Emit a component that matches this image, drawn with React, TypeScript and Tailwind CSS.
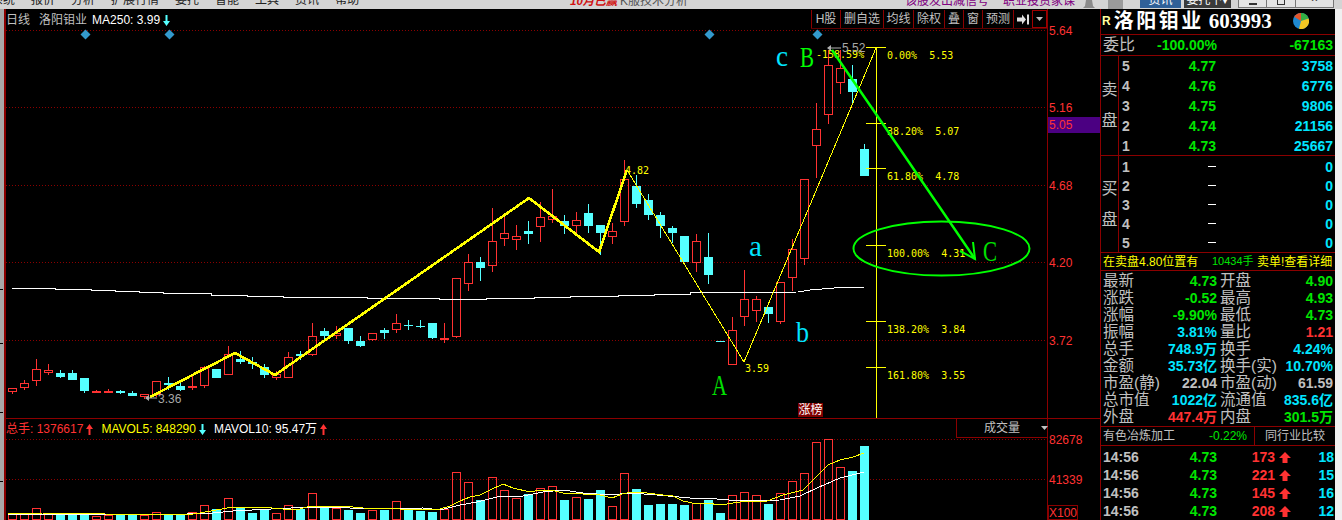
import React from "react";

/* =========================================================
   DATA
   candle: [color, high, bodyTop, bodyBottom, low] in page px
========================================================== */
type Candle = ["r" | "c", number, number, number, number];

const candles: Candle[] = [
  ["r", 388, 388, 391, 394], ["r", 380, 383, 387, 390], ["r", 359, 369, 380, 386], ["r", 364, 370, 372, 375],
  ["c", 370, 373, 377, 378], ["c", 370, 373, 380, 380], ["c", 378, 378, 391, 393], ["r", 390, 391, 392, 393],
  ["r", 389, 391, 392, 393], ["c", 390, 391, 393, 394], ["c", 391, 393, 396, 396], ["r", 394, 394, 396, 399],
  ["r", 381, 381, 394, 397], ["c", 377, 383, 385, 390], ["c", 382, 386, 390, 391], ["r", 376, 386, 387, 390],
  ["r", 366, 367, 385, 388], ["c", 369, 369, 378, 378], ["r", 346, 354, 374, 374], ["c", 351, 359, 362, 364],
  ["c", 357, 362, 364, 369], ["c", 364, 367, 375, 378], ["r", 371, 374, 377, 380], ["r", 352, 357, 377, 377],
  ["c", 351, 354, 356, 360], ["r", 323, 336, 354, 356], ["c", 328, 331, 336, 339], ["r", 326, 333, 335, 339],
  ["c", 328, 328, 341, 344], ["c", 336, 341, 346, 347], ["r", 333, 333, 339, 341], ["c", 328, 330, 333, 339],
  ["r", 314, 323, 329, 333], ["c", 320, 325, 326, 330], ["c", 320, 326, 327, 328], ["c", 323, 323, 338, 339],
  ["r", 323, 338, 339, 343], ["r", 278, 278, 336, 338], ["r", 254, 262, 283, 291], ["c", 257, 262, 268, 281],
  ["r", 208, 241, 265, 272], ["r", 214, 233, 238, 246], ["r", 225, 236, 239, 250], ["c", 221, 231, 234, 244],
  ["r", 202, 217, 226, 242], ["r", 189, 216, 219, 223], ["c", 215, 221, 226, 234], ["r", 212, 220, 225, 234],
  ["c", 204, 213, 226, 233], ["c", 225, 225, 233, 255], ["r", 223, 231, 236, 244], ["r", 160, 179, 221, 226],
  ["c", 175, 186, 204, 208], ["c", 194, 200, 215, 220], ["c", 212, 215, 226, 238], ["c", 226, 228, 233, 243],
  ["c", 236, 236, 262, 262], ["r", 234, 241, 262, 272], ["c", 233, 257, 275, 284], ["c", 341, 341, 341, 341],
  ["r", 317, 330, 364, 364], ["r", 270, 299, 316, 326], ["r", 296, 299, 310, 322], ["c", 307, 307, 314, 323],
  ["r", 282, 282, 321, 324], ["r", 239, 249, 277, 291], ["r", 179, 179, 258, 265], ["r", 103, 129, 145, 178],
  ["r", 50, 65, 114, 124], ["r", 50, 68, 82, 94], ["c", 65, 79, 92, 103], ["c", 144, 149, 176, 176],
];

const volumeTops = [
  514, 513, 508, 513, 515, 515, 513, 516, 515, 515, 515, 515, 512, 515, 515, 512, 505, 509,
  498, 508, 513, 509, 513, 505, 509, 493, 508, 508, 510, 513, 510, 510, 501, 509, 511, 512,
  509, 472, 482, 500, 477, 490, 498, 494, 488, 486, 500, 497, 499, 490, 506, 473, 489, 505,
  504, 504, 505, 503, 500, 513, 495, 492, 495, 504, 493, 481, 473, 442, 439, 467, 471, 446,
];

const ma250 =
  "12,288 55,288 55,289 91,289 91,290 115,290 115,291 139,291 139,292 163,292 163,293 211,293 211,295 247,295 247,296 283,296 283,297 367,297 367,298 439,298 439,299 486,299 486,298 534,298 534,297 570,297 570,296 618,296 618,295 654,295 654,294 690,294 690,293 798,292 810,290 822,289 834,288 864,287";

const volYellow =
  "8,514 43,513 78,513 105,514 187,515 200,513 227,508 237,507 260,507 283,509 300,509 310,506 343,506 363,508 400,509 440,509 450,506 460,501 470,497 480,495 490,490 503,484 513,488 530,492 540,490 555,491 563,493 583,494 600,495 612,498 622,494 633,492 647,493 663,495 673,496 683,501 697,504 707,503 720,505 740,502 767,501 783,495 803,490 815,478 828,465 840,460 853,457 864,453";

const volWhite =
  "8,514 103,515 187,514 213,513 233,511 310,507 333,507 367,509 423,508 440,510 460,505 477,502 497,497 523,496 543,492 563,490 583,493 610,495 630,493 657,495 690,498 717,499 740,501 780,500 800,496 817,488 840,478 864,472";

const stats: [string, string, string, string, string, string][] = [
  ["最新", "4.73", "text-[#00e600]", "开盘", "4.90", "text-[#00e600]"],
  ["涨跌", "-0.52", "text-[#00e600]", "最高", "4.93", "text-[#00e600]"],
  ["涨幅", "-9.90%", "text-[#00e600]", "最低", "4.73", "text-[#00e600]"],
  ["振幅", "3.81%", "text-[#00e5ff]", "量比", "1.21", "text-[#ff3232]"],
  ["总手", "748.9万", "text-[#00e5ff]", "换手", "4.24%", "text-[#00e5ff]"],
  ["金额", "35.73亿", "text-[#00e5ff]", "换手(实)", "10.70%", "text-[#00e5ff]"],
  ["市盈(静)", "22.04", "text-[#c0c0c0]", "市盈(动)", "61.59", "text-[#c0c0c0]"],
  ["总市值", "1022亿", "text-[#00e5ff]", "流通值", "835.6亿", "text-[#00e5ff]"],
  ["外盘", "447.4万", "text-[#ff3232]", "内盘", "301.5万", "text-[#00e600]"],
];

const sells = [
  ["5", "4.77", "3758"],
  ["4", "4.76", "6776"],
  ["3", "4.75", "9806"],
  ["2", "4.74", "21156"],
  ["1", "4.73", "25667"],
];

const ticks = [
  ["173", "18"],
  ["221", "15"],
  ["145", "16"],
  ["208", "12"],
];

const fibs: [number, string][] = [
  [47.5, "0.00%  5.53"],
  [123.5, "38.20%  5.07"],
  [168.5, "61.80%  4.78"],
  [245.5, "100.00%  4.31"],
  [321.5, "138.20%  3.84"],
  [367.5, "161.80%  3.55"],
];

const toolbar: [string, string][] = [
  ["H股", "w-[29px]"],
  ["删自选", "w-[43px]"],
  ["均线", "w-[30px]"],
  ["除权", "w-[31px]"],
  ["叠", "w-[19px]"],
  ["窗", "w-[19px]"],
  ["预测", "w-[31px]"],
];

const RED = "#ff3232";
const CYAN = "#55ffff";
const YELLOW = "#ffff00";
const DOT = "#8b0000";

/* =========================================================
   SMALL GLYPHS
========================================================== */
function ThinArrow({ up, color }: { up?: boolean; color: string }) {
  return (
    <svg width="7" height="11" viewBox="0 0 7 11" className={up ? "" : "rotate-180"}>
      <polygon points="3.5,0 7,5 4.5,5 4.5,11 2.5,11 2.5,5 0,5" fill={color} />
    </svg>
  );
}

function FatArrow() {
  return (
    <svg width="12" height="11" viewBox="0 0 12 11">
      <polygon points="6,0 12,6 8.5,6 8.5,11 3.5,11 3.5,6 0,6" fill={RED} />
    </svg>
  );
}

function PieLogo() {
  return (
    <svg width="16" height="16" viewBox="0 0 16 16">
      <circle cx="8" cy="8" r="8" fill="#1e88d0" />
      <path d="M8 8 L8 0 A8 8 0 0 1 15.6 5.5 Z" fill="#33b043" />
      <path d="M8 8 L15.6 5.5 A8 8 0 0 1 6 15.8 Z" fill="#f2c522" />
      <path d="M8 8 L1.2 3.8 A8 8 0 0 1 8 0 Z" fill="#e2562c" />
    </svg>
  );
}

/* =========================================================
   TOP WINDOW STRIP (cut off by the screenshot)
========================================================== */
function TopStrip() {
  return (
    <div className="flex h-[9px] w-full overflow-hidden bg-[#d4d4d4] text-[12px] leading-[12px] text-[#222222]">
      <div className="-mt-[6px] -ml-[9px] flex w-[579px] shrink-0 gap-4">
        {["系统", "报价", "分析", "扩展行情", "委托", "智能", "工具", "资讯", "帮助"].map((m) => (
          <span key={m}>{m}</span>
        ))}
      </div>
      <span className="-mt-[5px] w-[50px] shrink-0 whitespace-nowrap text-[11.5px] font-bold text-[#d01010] italic">10月已赢</span>
      <span className="-mt-[5px] w-[285px] shrink-0 text-[#555555]">K服技术分析</span>
      <span className="-mt-[5px] w-[98px] shrink-0 text-[#800080]">该股发出减信号</span>
      <span className="-mt-[5px] w-[79px] shrink-0 text-[#800080]">职业投资家课</span>
      <svg width="14" height="9" viewBox="0 0 14 9" className="shrink-0">
        <path d="M4 0 H10 L11 6 L13 8 H1 L3 6 Z" fill="#8a8a8a" />
      </svg>
      <div className="ml-[12px] h-[9px] w-[15px] shrink-0 bg-[#9a9a9a]" />
      <div className="ml-[17px] flex h-[8px] w-[41px] shrink-0 justify-center bg-[#2f6098] text-white">
        <span className="-mt-[6px]">资讯</span>
      </div>
      <div className="ml-[3px] flex h-[8px] w-[47px] shrink-0 justify-center bg-[#3a3a3a] text-white">
        <span className="-mt-[6px]">委托下▾</span>
      </div>
      <div className="ml-[7px] flex h-[8px] shrink-0 border border-t-0 border-[#777777] bg-[#e4e4e4] text-[#222222]">
        <div className="flex w-[28px] justify-center border-r border-[#777777]">
          <div className="mt-[3px] h-[2px] w-[8px] bg-[#333333]" />
        </div>
        <div className="flex w-[29px] justify-center border-r border-[#777777]">
          <div className="h-[5px] w-[8px] border border-t-0 border-[#333333]" />
        </div>
        <div className="flex w-[37px] justify-center text-[11px] font-bold">
          <span className="-mt-[8px]">×</span>
        </div>
      </div>
    </div>
  );
}

/* =========================================================
   PRICE PANEL
========================================================== */
function PricePanel() {
  return (
    <div className="relative h-[409px] w-full">
      <svg width="1094" height="409" viewBox="6 9 1094 409" className="block">
        {/* dotted grid */}
        {[30.5, 107.5, 185.5, 262.5, 340.5].map((y) => (
          <line key={y} x1="6" x2="1047" y1={y} y2={y} stroke={DOT} strokeDasharray="1 2" />
        ))}

        {/* markers */}
        {[[85.5, 34.5], [169.5, 34.5], [709.5, 34.5], [817.5, 34.5]].map(([x, y]) => (
          <polygon key={x} points={`${x},${y - 5} ${x + 5},${y} ${x},${y + 5} ${x - 5},${y}`} fill="#3399cc" />
        ))}

        {/* candles */}
        <g shapeRendering="crispEdges">
          {candles.map(([c, hi, top, bot, lo], i) => {
            const x = 12.5 + 12 * i;
            if (c === "c") {
              return (
                <g key={i}>
                  <line x1={x} x2={x} y1={hi} y2={lo} stroke={CYAN} />
                  <rect x={x - 4.5} y={top} width="9" height={Math.max(bot - top, 1)} fill={CYAN} />
                </g>
              );
            }
            return (
              <g key={i}>
                <line x1={x} x2={x} y1={hi} y2={top} stroke={RED} />
                <line x1={x} x2={x} y1={bot} y2={lo} stroke={RED} />
                <rect x={x - 4} y={top + 0.5} width="8" height={bot - top} fill="none" stroke={RED} />
              </g>
            );
          })}
        </g>

        {/* MA250 */}
        <polyline points={ma250} fill="none" stroke="#ffffff" shapeRendering="crispEdges" />

        {/* wave lines */}
        <polyline
          points="150,397 235,353 275,375 529,198 599,252 627,170"
          fill="none"
          stroke={YELLOW}
          strokeWidth="2.6"
          shapeRendering="crispEdges"
        />
        <polyline points="627,170 744,362 876,48" fill="none" stroke={YELLOW} shapeRendering="crispEdges" />

        {/* fibonacci ruler */}
        <line x1="876.5" x2="876.5" y1="47" y2="418" stroke={YELLOW} shapeRendering="crispEdges" />
        {fibs.map(([y, label]) => (
          <g key={y}>
            <line x1="866" x2="886" y1={y} y2={y} stroke={YELLOW} shapeRendering="crispEdges" />
            <text x="887" y={y + 11} fill={YELLOW} xmlSpace="preserve" className="font-['DejaVu_Sans_Mono',monospace] text-[10px]">
              {label}
            </text>
          </g>
        ))}

        {/* prices on the chart */}
        <g fill={YELLOW} className="font-['DejaVu_Sans_Mono',monospace] text-[10px]">
          <text x="816" y="58">-158.59%</text>
          <text x="625" y="174">4.82</text>
          <text x="745" y="372">3.59</text>
        </g>
        <g fill="#a8a8a8" className="text-[12px]">
          <text x="842" y="52">5.52</text>
          <text x="158" y="403">3.36</text>
        </g>
        <path d="M145 398 L149 395 V397.5 H157 V398.5 H149 V401 Z" fill="#b0b0b0" />
        <path d="M827 48 L831 45 V47.5 H841 V48.5 H831 V51 Z" fill="#b0b0b0" />

        {/* drawn arrow and ellipse */}
        <polyline points="832,50 887,130 975,259" fill="none" stroke="#00ff00" strokeWidth="2.5" />
        <path d="M960 251 L975 259 L973 242" fill="none" stroke="#00ff00" strokeWidth="2" />
        <ellipse cx="941.5" cy="248.5" rx="88" ry="27" fill="none" stroke="#00ff00" strokeWidth="2" />

        {/* wave letters */}
        <g className="font-['Liberation_Serif',serif] text-[30px]">
          <text x="776" y="66" fill="#00e5ff" textLength="12" lengthAdjust="spacingAndGlyphs">c</text>
          <text x="800" y="67" fill="#00ff00" textLength="14" lengthAdjust="spacingAndGlyphs">B</text>
          <text x="749" y="256" fill="#00e5ff" textLength="13" lengthAdjust="spacingAndGlyphs">a</text>
          <text x="796" y="342" fill="#00e5ff" textLength="13" lengthAdjust="spacingAndGlyphs">b</text>
          <text x="712" y="395" fill="#00e000" textLength="15" lengthAdjust="spacingAndGlyphs">A</text>
          <text x="983" y="261" fill="#00e000" textLength="14" lengthAdjust="spacingAndGlyphs">C</text>
        </g>

        {/* price axis */}
        <line x1="1047.5" x2="1047.5" y1="9" y2="418" stroke="#8b0000" />
        <rect x="1048" y="117" width="52" height="16" fill="#4b0082" />
        <g fill={RED} className="text-[12px]">
          <text x="1049" y="35">5.64</text>
          <text x="1049" y="112">5.16</text>
          <text x="1049" y="129">5.05</text>
          <text x="1049" y="190">4.68</text>
          <text x="1049" y="267">4.20</text>
          <text x="1049" y="345">3.72</text>
        </g>
      </svg>

      {/* title legend */}
      <div className="absolute top-[4px] left-0 flex h-[14px] items-center text-[12px] leading-[14px] text-[#c0c0c0]">
        <span>日线</span>
        <span className="ml-[9px]">洛阳钼业</span>
        <span className="ml-[5px] text-white">MA250: 3.99</span>
        <span className="ml-[3px]">
          <ThinArrow color="#55ffff" />
        </span>
      </div>

      {/* toolbar */}
      <div className="absolute top-[1px] left-[805px] flex h-[19px] border-b border-[#5c0000] text-[12px] text-[#c0c0c0]">
        {toolbar.map(([label, width]) => (
          <div key={label} className={`flex items-center justify-center border-l border-[#8b0000] ${width}`}>
            {label}
          </div>
        ))}
        <div className="flex w-[19px] items-center justify-center border-l border-[#8b0000]">
          <svg width="12" height="11" viewBox="0 0 12 11">
            <path d="M0 3.5 H5 V0.5 L9 5.5 L5 10.5 V7.5 H0 Z M10 0.5 H12 V10.5 H10 Z" fill="#e0e0e0" />
          </svg>
        </div>
        <div className="flex w-[15px] items-center justify-center border border-[#a00000]">
          <svg width="7" height="4" viewBox="0 0 7 4">
            <polygon points="0,0 7,0 3.5,4" fill="#c0c0c0" />
          </svg>
        </div>
      </div>

      {/* rank tag */}
      <div className="absolute top-[394px] left-[792px] flex h-[14px] w-[25px] items-center justify-center bg-[#800000] text-[12px] text-white">
        涨榜
      </div>
    </div>
  );
}

/* =========================================================
   VOLUME PANEL
========================================================== */
function VolumePanel() {
  return (
    <div className="relative h-[102px] w-full">
      <svg width="1094" height="102" viewBox="6 418 1094 102" className="block">
        <line x1="6" x2="1100" y1="418.5" y2="418.5" stroke="#8b0000" />
        {[439.5, 479.5].map((y) => (
          <line key={y} x1="6" x2="1047" y1={y} y2={y} stroke={DOT} strokeDasharray="1 2" />
        ))}
        <g shapeRendering="crispEdges">
          {volumeTops.map((top, i) => {
            const x = 12.5 + 12 * i;
            return candles[i][0] === "c" ? (
              <rect key={i} x={x - 4.5} y={top} width="9" height={520 - top} fill={CYAN} />
            ) : (
              <rect key={i} x={x - 4} y={top + 0.5} width="8" height={519 - top} fill="none" stroke={RED} />
            );
          })}
          <polyline points={volWhite} fill="none" stroke="#ffffff" />
          <polyline points={volYellow} fill="none" stroke={YELLOW} />
        </g>
        <line x1="1047.5" x2="1047.5" y1="418" y2="520" stroke="#8b0000" />
        <rect x="1048.5" y="505.5" width="29" height="14" fill="none" stroke="#8b0000" />
        <g fill={RED} className="text-[12px]">
          <text x="1049" y="444">82678</text>
          <text x="1049" y="484">41339</text>
          <text x="1049" y="517">X100</text>
        </g>
      </svg>

      {/* legend */}
      <div className="absolute top-[4px] left-0 flex h-[14px] items-center text-[12px] leading-[14px]">
        <span className="text-[#ff3232]">总手: 1376617</span>
        <span className="ml-[3px]">
          <ThinArrow up color="#ff3232" />
        </span>
        <span className="ml-[8px] text-[#ffff00]">MAVOL5: 848290</span>
        <span className="ml-[3px]">
          <ThinArrow color="#55ffff" />
        </span>
        <span className="ml-[8px] text-white">MAVOL10: 95.47万</span>
        <span className="ml-[3px]">
          <ThinArrow up color="#ff3232" />
        </span>
      </div>

      {/* indicator select */}
      <div className="absolute top-[1px] left-[950px] flex h-[19px] w-[91px] items-center border-b border-l border-[#8b0000] pl-[27px] text-[12px] text-[#c0c0c0]">
        <span className="shrink-0 whitespace-nowrap">成交量</span>
        <svg width="7" height="4" viewBox="0 0 7 4" className="ml-[21px] shrink-0">
          <polygon points="0,0 7,0 3.5,4" fill="#c0c0c0" />
        </svg>
      </div>
    </div>
  );
}

/* =========================================================
   QUOTE PANEL
========================================================== */
function QuotePanel() {
  return (
    <div className="flex h-[511px] w-[235px] shrink-0 flex-col border-l border-[#8b0000] text-[14px] font-bold leading-none">
      {/* name */}
      <div className="flex h-[25px] items-center">
        <span className="ml-px text-[12px] text-[#ffffa0]">R</span>
        <span className="ml-[3px] whitespace-nowrap text-[20px] tracking-[2.5px] text-white">洛阳钼业</span>
        <span className="ml-[5px] font-['Liberation_Serif',serif] text-[21px] text-white">603993</span>
        <span className="mr-[26px] ml-auto">
          <PieLogo />
        </span>
      </div>

      {/* commission ratio */}
      <div className="flex h-[23px] items-center border-y border-[#8b0000] pr-[2px] pl-[2px]">
        <span className="text-[16px] font-normal text-[#c0c0c0]">委比</span>
        <span className="ml-[22px] text-[#00e600]">-100.00%</span>
        <span className="ml-auto text-[#00e600]">-67163</span>
      </div>

      {/* sell book */}
      <div className="flex h-[100px] border-b border-[#8b0000]">
        <div className="flex w-[18px] shrink-0 flex-col items-center justify-center gap-[15px] border-r border-[#8b0000] text-[16px] font-normal text-[#c0c0c0]">
          <span>卖</span>
          <span>盘</span>
        </div>
        <div className="flex flex-1 flex-col">
          {sells.map(([n, price, vol]) => (
            <div key={n} className="flex h-5 items-center pr-[2px] pl-[3px]">
              <span className="w-[8px] text-[#c0c0c0]">{n}</span>
              <span className="w-[86px] text-right text-[#00e600]">{price}</span>
              <span className="ml-auto text-[#00e5ff]">{vol}</span>
            </div>
          ))}
        </div>
      </div>

      {/* buy book */}
      <div className="flex h-[97px] border-b border-[#8b0000]">
        <div className="flex w-[18px] shrink-0 flex-col items-center justify-center gap-[15px] border-r border-[#8b0000] text-[16px] font-normal text-[#c0c0c0]">
          <span>买</span>
          <span>盘</span>
        </div>
        <div className="flex flex-1 flex-col pt-px">
          {["1", "2", "3", "4", "5"].map((n) => (
            <div key={n} className="flex h-5 items-center pr-[2px] pl-[3px]">
              <span className="w-[8px] text-[#c0c0c0]">{n}</span>
              <span className="ml-[78px] h-px w-[8px] bg-white" />
              <span className="ml-auto text-[#00e5ff]">0</span>
            </div>
          ))}
        </div>
      </div>

      {/* big order notice */}
      <div className="flex h-[18px] items-center border-b border-[#8b0000] pl-[2px] text-[12px] font-normal text-[#ffff00]">
        <span className="w-[109px] shrink-0 whitespace-nowrap">在卖盘4.80位置有</span>
        <span className="w-[45px] shrink-0 whitespace-nowrap text-[11px] text-[#00e600]">10434手</span>
        <span className="whitespace-nowrap">卖单!查看详细</span>
      </div>

      {/* stats */}
      <div className="flex h-[156px] flex-col border-b border-[#8b0000] py-px pr-[2px] pl-[2px]">
        {stats.map(([l1, v1, c1, l2, v2, c2]) => (
          <div key={l1} className="flex h-[17px] items-center">
            <div className="flex w-[114px] items-center justify-between">
              <span className="text-[15.5px] font-normal text-[#c0c0c0]">{l1}</span>
              <span className={c1}>{v1}</span>
            </div>
            <div className="ml-[3px] flex flex-1 items-center justify-between">
              <span className="text-[15.5px] font-normal text-[#c0c0c0]">{l2}</span>
              <span className={c2}>{v2}</span>
            </div>
          </div>
        ))}
      </div>

      {/* industry */}
      <div className="flex h-[19px] items-center border-b border-[#8b0000] text-[12px] font-normal">
        <span className="ml-[2px] w-[106px] text-[#c0c0c0]">有色冶炼加工</span>
        <span className="w-[45px] text-[#00e600]">-0.22%</span>
        <span className="flex h-full flex-1 items-center justify-center border-l border-[#8b0000] text-[#c0c0c0]">
          同行业比较
        </span>
      </div>

      {/* ticks */}
      <div className="flex flex-1 flex-col pt-[2px]">
        {ticks.map(([vol, n], i) => (
          <div key={i} className="flex h-[18px] items-center pr-[1px] pl-[2px]">
            <span className="w-[36px] text-[#c0c0c0]">14:56</span>
            <span className="w-[78px] text-right text-[#00e600]">4.73</span>
            <span className="w-[58px] text-right text-[#ff3232]">{vol}</span>
            <span className="ml-[4px]">
              <FatArrow />
            </span>
            <span className="ml-auto text-[#00e5ff]">{n}</span>
          </div>
        ))}
      </div>
    </div>
  );
}

/* =========================================================
   PAGE
========================================================== */
export default function App() {
  return (
    <div className="flex h-[520px] w-[1342px] flex-col overflow-hidden bg-black font-['Liberation_Sans','Noto_Sans_CJK_SC',sans-serif]">
      <TopStrip />
      <div className="flex flex-1">
        {/* left window edge */}
        <div className="relative w-[6px] shrink-0 border-r-2 border-[#8b0000] bg-[#a8a8a8]">
          {[280, 334, 403, 472].map((y) => (
            <div key={y} className="absolute left-0 h-px w-[3px] bg-black" style={{ top: y }} />
          ))}
        </div>
        <div className="flex w-[1094px] shrink-0 flex-col">
          <PricePanel />
          <VolumePanel />
        </div>
        <QuotePanel />
        <div className="flex-1 bg-[#f0f0f0]" />
      </div>
    </div>
  );
}
